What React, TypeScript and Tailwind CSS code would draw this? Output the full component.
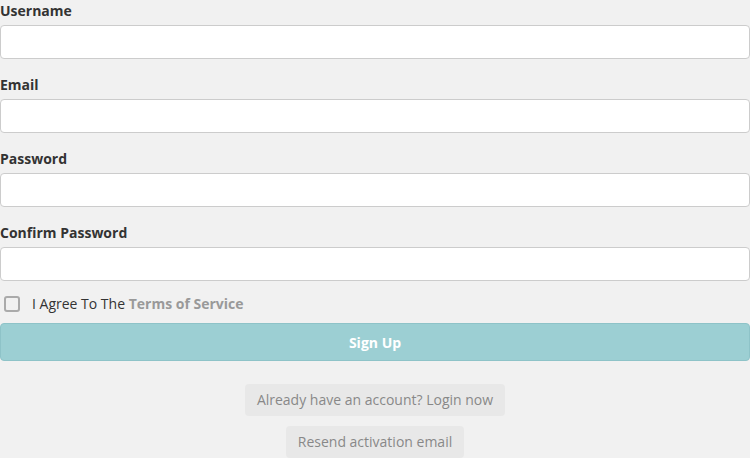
import React from 'react';

const fields = ['Username', 'Email', 'Password', 'Confirm Password'];

const App = () => {
    return (
        <div className="w-[750px] h-[458px] overflow-hidden bg-[#f1f1f1] text-[#333] font-['Open_Sans',sans-serif]">
            {fields.map((label) => (
                <div key={label} className="mb-[15px]">
                    <label className="block text-sm font-bold leading-5 pt-[1px] mb-[4px]">{label}</label>
                    <input
                        type={label.includes('Password') ? 'password' : 'text'}
                        className="block w-full h-[34px] bg-white border border-[#ccc] rounded px-3 text-sm outline-none"
                    />
                </div>
            ))}
            <div className="flex items-center h-[14px] mt-[16px] mb-[12px] pl-1">
                <span className="w-4 h-4 border-2 border-[#aaa] rounded-[3px] bg-[#f1f1f1]" />
                <span className="ml-3 text-sm text-[#333]">
                    I Agree To The <a className="font-bold text-[#999]">Terms of Service</a>
                </span>
            </div>
            <button className="block w-full h-[38px] pt-[1px] bg-[#9ccfd3] border border-[#8ec3c8] rounded text-white text-sm font-bold">
                Sign Up
            </button>
            <div className="flex flex-col items-center gap-[10px] mt-[23px]">
                <button className="h-[32px] px-3 rounded bg-[#e8e8e8] text-sm text-[#888]">
                    Already have an account? Login now
                </button>
                <button className="h-[32px] px-3 rounded bg-[#e8e8e8] text-sm text-[#888]">
                    Resend activation email
                </button>
            </div>
        </div>
    );
};

export default App;
